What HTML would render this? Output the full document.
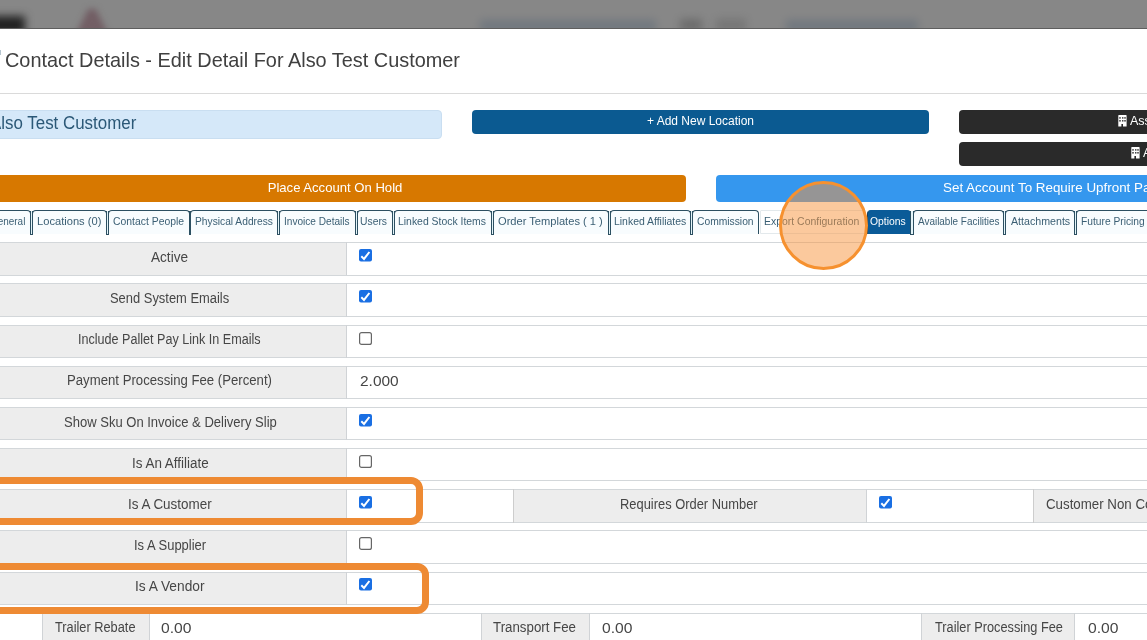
<!DOCTYPE html><html><head><meta charset="utf-8"><style>
html,body{margin:0;padding:0;width:1147px;height:640px;overflow:hidden;background:#fff;font-family:"Liberation Sans",sans-serif;}
body{position:relative;}
.a{position:absolute;box-sizing:border-box;}
.btn{color:#fff;text-align:center;white-space:nowrap;border-radius:4px;}
.tab{top:210px;height:24px;border:1px solid #2c4f61;border-bottom:none;border-radius:4px 4px 0 0;background:#f8fcfe;color:#3b5f74;font-size:10.8px;line-height:21px;white-space:pre;overflow:hidden;}
.gap{top:211px;height:24px;border:1px solid #2c4f61;border-top:none;background:#e4f5fa;}
.hb{height:1px;background:#d3d7da;}
.vb{width:1px;background:#d0d3d6;}
.lab{background:#ededed;color:#464646;font-size:14px;text-align:center;white-space:nowrap;}
.sx{display:inline-block;transform:scaleX(0.93);}
.sxl{display:inline-block;transform-origin:0 0;transform:scaleX(0.93);}
.cb{width:13px;height:13px;}
.val{font-size:13px;color:#454545;white-space:nowrap;letter-spacing:1px;}
.hl{border:7.2px solid #ee8a33;border-radius:12px;}
</style></head><body><div id="wrap" style="position:absolute;left:0;top:0;width:1147px;height:640px;overflow:hidden;will-change:transform;">
<div class="a" style="left:0;top:0;width:1147px;height:28.6px;background:#878787;"></div>
<div class="a" style="left:0;top:0;width:1147px;height:28px;overflow:hidden;"><div class="a" style="left:-10px;top:16px;width:35px;height:18px;background:#222;filter:blur(4px);"></div><div class="a" style="left:70px;top:4px;width:44px;height:30px;filter:blur(3px);"><div class="a" style="left:6px;top:5px;width:32px;height:25px;background:#725e64;clip-path:polygon(38% 0,62% 0,100% 100%,0 100%);"></div></div><div class="a" style="left:480px;top:20px;width:176px;height:12px;background:#5f6b78;filter:blur(4px);opacity:0.55"></div><div class="a" style="left:680px;top:19px;width:22px;height:12px;background:#5a5a5a;filter:blur(4px);opacity:0.6"></div><div class="a" style="left:716px;top:19px;width:30px;height:12px;background:#6a6a6a;filter:blur(4px);opacity:0.6"></div><div class="a" style="left:786px;top:20px;width:132px;height:12px;background:#5f6b78;filter:blur(4px);opacity:0.55"></div></div>
<div class="a" style="left:0;top:27.6px;width:1147px;height:1px;background:#5e5e5e;"></div>
<div class="a" style="left:0;top:50px;width:1.2px;height:5px;background:#b5c5d0;"></div>
<div class="a" style="left:5px;top:46.5px;font-size:21px;line-height:26px;color:#404040;white-space:nowrap;transform-origin:0 0;transform:scaleX(0.9470);">Contact Details - Edit Detail For Also Test Customer</div>
<div class="a" style="left:0;top:93px;width:1147px;height:1px;background:#dadada;"></div>
<div class="a" style="left:-20px;top:110px;width:462px;height:28.5px;background:#d5e8f9;border:1px solid #c9def1;border-radius:4px;"></div>
<div class="a" style="left:-10.29px;top:110px;font-size:17.5px;line-height:26px;color:#2b5877;white-space:nowrap;transform-origin:0 0;transform:scaleX(0.9662);">Also Test Customer</div>
<div class="a btn" style="left:472px;top:110px;width:457px;height:24px;background:#0b5a91;font-size:12px;line-height:23px;">+ Add New Location</div>
<div class="a btn" style="left:959px;top:110px;width:240px;height:23.5px;background:#2a2a2a;font-size:12px;line-height:23px;text-align:left;padding-left:171px;font-size:12.5px;">Assign</div>
<div class="a btn" style="left:959px;top:142.2px;width:240px;height:24.3px;background:#2a2a2a;font-size:12px;line-height:23px;text-align:left;padding-left:184px;font-size:12.5px;">Add</div>
<svg class="a" style="left:1117.9px;top:115px" width="9" height="12" viewBox="0 0 9 12"><path d="M0.3 0.6 Q0.3 0 0.9 0 H8 Q8.6 0 8.6 0.6 V11.6 H5 V9 H3.4 V11.6 H0.3 Z" fill="#fff"/><g fill="#333"><rect x="1.3" y="2.1" width="1.4" height="1.6"/><rect x="4.1" y="2.1" width="1.3" height="1.6"/><rect x="6.3" y="2.1" width="1.4" height="1.6"/><rect x="1.3" y="5" width="1.4" height="1.6"/><rect x="4.1" y="5" width="1.3" height="1.6"/><rect x="6.3" y="5" width="1.4" height="1.6"/></g></svg>
<svg class="a" style="left:1131.2px;top:147.2px" width="9" height="12" viewBox="0 0 9 12"><path d="M0.3 0.6 Q0.3 0 0.9 0 H8 Q8.6 0 8.6 0.6 V11.6 H5 V9 H3.4 V11.6 H0.3 Z" fill="#fff"/><g fill="#333"><rect x="1.3" y="2.1" width="1.4" height="1.6"/><rect x="4.1" y="2.1" width="1.3" height="1.6"/><rect x="6.3" y="2.1" width="1.4" height="1.6"/><rect x="1.3" y="5" width="1.4" height="1.6"/><rect x="4.1" y="5" width="1.3" height="1.6"/><rect x="6.3" y="5" width="1.4" height="1.6"/></g></svg>
<div class="a btn" style="left:-16px;top:175px;width:702px;height:26.5px;background:#d77800;font-size:13.1px;line-height:26px;">Place Account On Hold</div>
<div class="a btn" style="left:716px;top:175px;width:600px;height:26.5px;background:#3597ee;font-size:13.4px;line-height:26px;text-align:left;padding-left:227px;">Set Account To Require Upfront Payment</div>
<div class="a tab" style="left:-40px;width:71px;"><span class="a" style="left:29.45px;top:0;transform-origin:0 0;transform:scaleX(0.9200);">General</span></div>
<div class="a tab" style="left:32.4px;width:74.80000000000001px;"><span class="a" style="left:3.70px;top:0;transform-origin:0 0;transform:scaleX(1.0317);">Locations (0)</span></div>
<div class="a tab" style="left:108.2px;width:81.39999999999999px;"><span class="a" style="left:3.70px;top:0;transform-origin:0 0;transform:scaleX(0.9630);">Contact People</span></div>
<div class="a tab" style="left:190.4px;width:87.9px;"><span class="a" style="left:3.50px;top:0;transform-origin:0 0;transform:scaleX(0.9475);">Physical Address</span></div>
<div class="a tab" style="left:279.4px;width:76.20000000000005px;"><span class="a" style="left:3.50px;top:0;transform-origin:0 0;transform:scaleX(0.9342);">Invoice Details</span></div>
<div class="a tab" style="left:356.6px;width:36.19999999999999px;"><span class="a" style="left:2.80px;top:0;transform-origin:0 0;transform:scaleX(0.9573);">Users</span></div>
<div class="a tab" style="left:394px;width:98px;"><span class="a" style="left:3.40px;top:0;transform-origin:0 0;transform:scaleX(0.9647);">Linked Stock Items</span></div>
<div class="a tab" style="left:493.4px;width:115.20000000000005px;"><span class="a" style="left:3.20px;top:0;transform-origin:0 0;transform:scaleX(1.0293);">Order Templates ( 1 )</span></div>
<div class="a tab" style="left:609.6px;width:81.79999999999995px;"><span class="a" style="left:3.30px;top:0;transform-origin:0 0;transform:scaleX(0.9660);">Linked Affiliates</span></div>
<div class="a tab" style="left:692.4px;width:67.0px;"><span class="a" style="left:3.80px;top:0;transform-origin:0 0;transform:scaleX(0.9528);">Commission</span></div>
<div class="a tab" style="left:760.4px;width:106.10000000000002px;border-color:#e3e9ec;border-radius:1px 1px 0 0;background:#fff;border-bottom:1px solid #e3e9ec;"><span class="a" style="left:3.00px;top:0;transform-origin:0 0;transform:scaleX(0.9681);">Export Configuration</span></div>
<div class="a tab" style="left:866.5px;width:44.5px;background:#0a5b98;border-color:#0a5b98;border-left-color:#17405e;color:#fff;"><span class="a" style="left:2.90px;top:0;transform-origin:0 0;transform:scaleX(0.9592);">Options</span></div>
<div class="a tab" style="left:912.5px;width:91.5px;"><span class="a" style="left:4.00px;top:0;transform-origin:0 0;transform:scaleX(0.9196);">Available Facilities</span></div>
<div class="a tab" style="left:1005.3px;width:69.5px;"><span class="a" style="left:4.60px;top:0;transform-origin:0 0;transform:scaleX(0.9864);">Attachments</span></div>
<div class="a tab" style="left:1076.4px;width:83.59999999999991px;"><span class="a" style="left:3.70px;top:0;transform-origin:0 0;transform:scaleX(0.9477);">Future Pricing</span></div>
<div class="a gap" style="left:30px;width:3.3999999999999986px;"></div>
<div class="a gap" style="left:106.2px;width:3.0px;"></div>
<div class="a gap" style="left:188.6px;width:2.8000000000000114px;"></div>
<div class="a gap" style="left:277.3px;width:3.099999999999966px;"></div>
<div class="a gap" style="left:354.6px;width:3.0px;"></div>
<div class="a gap" style="left:391.8px;width:3.1999999999999886px;"></div>
<div class="a gap" style="left:491px;width:3.3999999999999773px;"></div>
<div class="a gap" style="left:607.6px;width:3.0px;"></div>
<div class="a gap" style="left:690.4px;width:3.0px;"></div>
<div class="a gap" style="left:910px;width:3.5px;"></div>
<div class="a gap" style="left:1003px;width:3.2999999999999545px;"></div>
<div class="a gap" style="left:1073.8px;width:3.6000000000001364px;"></div>
<div class="a lab" style="left:-6px;top:242.30px;width:352px;height:33.2px;"></div>
<span class="a" style="left:151.40px;top:249.85px;font-size:14px;line-height:14px;color:#464646;white-space:pre;transform-origin:0 0;transform:scaleX(0.9705);">Active</span>
<div class="a hb" style="left:0;top:242.30px;width:1147px;"></div>
<div class="a hb" style="left:0;top:274.50px;width:1147px;"></div>
<div class="a vb" style="left:346px;top:242.30px;height:33.2px;"></div>
<svg class="a" style="left:359.00px;top:249.10px" width="13" height="13" viewBox="0 0 13 13"><rect x="0" y="0" width="13" height="12.6" rx="2" fill="#1a6fe3"/><path d="M2.3 7.3 L5 9.9 L10.4 3" stroke="#fff" stroke-width="2" fill="none" stroke-linecap="butt" stroke-linejoin="miter"/></svg>
<div class="a lab" style="left:-6px;top:283.47px;width:352px;height:33.2px;"></div>
<span class="a" style="left:109.80px;top:291.02px;font-size:14px;line-height:14px;color:#464646;white-space:pre;transform-origin:0 0;transform:scaleX(0.9228);">Send System Emails</span>
<div class="a hb" style="left:0;top:283.47px;width:1147px;"></div>
<div class="a hb" style="left:0;top:315.67px;width:1147px;"></div>
<div class="a vb" style="left:346px;top:283.47px;height:33.2px;"></div>
<svg class="a" style="left:359.00px;top:290.27px" width="13" height="13" viewBox="0 0 13 13"><rect x="0" y="0" width="13" height="12.6" rx="2" fill="#1a6fe3"/><path d="M2.3 7.3 L5 9.9 L10.4 3" stroke="#fff" stroke-width="2" fill="none" stroke-linecap="butt" stroke-linejoin="miter"/></svg>
<div class="a lab" style="left:-6px;top:324.64px;width:352px;height:33.2px;"></div>
<span class="a" style="left:78.40px;top:332.19px;font-size:14px;line-height:14px;color:#464646;white-space:pre;transform-origin:0 0;transform:scaleX(0.8990);">Include Pallet Pay Link In Emails</span>
<div class="a hb" style="left:0;top:324.64px;width:1147px;"></div>
<div class="a hb" style="left:0;top:356.84px;width:1147px;"></div>
<div class="a vb" style="left:346px;top:324.64px;height:33.2px;"></div>
<svg class="a" style="left:359.00px;top:331.64px" width="13" height="13" viewBox="0 0 13 13"><rect x="0.6" y="0.6" width="11.8" height="11.8" rx="2" fill="#fff" stroke="#666" stroke-width="1.2"/></svg>
<div class="a lab" style="left:-6px;top:365.81px;width:352px;height:33.2px;"></div>
<span class="a" style="left:66.50px;top:373.36px;font-size:14px;line-height:14px;color:#464646;white-space:pre;transform-origin:0 0;transform:scaleX(0.9409);">Payment Processing Fee (Percent)</span>
<div class="a hb" style="left:0;top:365.81px;width:1147px;"></div>
<div class="a hb" style="left:0;top:398.01px;width:1147px;"></div>
<div class="a vb" style="left:346px;top:365.81px;height:33.2px;"></div>
<span class="a" style="left:359.70px;top:374.16px;font-size:14px;line-height:14px;color:#464646;white-space:pre;transform-origin:0 0;transform:scaleX(1.1042);">2.000</span>
<div class="a lab" style="left:-6px;top:406.98px;width:352px;height:33.2px;"></div>
<span class="a" style="left:63.70px;top:414.53px;font-size:14px;line-height:14px;color:#464646;white-space:pre;transform-origin:0 0;transform:scaleX(0.9302);">Show Sku On Invoice &amp; Delivery Slip</span>
<div class="a hb" style="left:0;top:406.98px;width:1147px;"></div>
<div class="a hb" style="left:0;top:439.18px;width:1147px;"></div>
<div class="a vb" style="left:346px;top:406.98px;height:33.2px;"></div>
<svg class="a" style="left:359.00px;top:413.78px" width="13" height="13" viewBox="0 0 13 13"><rect x="0" y="0" width="13" height="12.6" rx="2" fill="#1a6fe3"/><path d="M2.3 7.3 L5 9.9 L10.4 3" stroke="#fff" stroke-width="2" fill="none" stroke-linecap="butt" stroke-linejoin="miter"/></svg>
<div class="a lab" style="left:-6px;top:448.15px;width:352px;height:33.2px;"></div>
<span class="a" style="left:131.60px;top:455.70px;font-size:14px;line-height:14px;color:#464646;white-space:pre;transform-origin:0 0;transform:scaleX(0.9586);">Is An Affiliate</span>
<div class="a hb" style="left:0;top:448.15px;width:1147px;"></div>
<div class="a hb" style="left:0;top:480.35px;width:1147px;"></div>
<div class="a vb" style="left:346px;top:448.15px;height:33.2px;"></div>
<svg class="a" style="left:359.00px;top:455.15px" width="13" height="13" viewBox="0 0 13 13"><rect x="0.6" y="0.6" width="11.8" height="11.8" rx="2" fill="#fff" stroke="#666" stroke-width="1.2"/></svg>
<div class="a lab" style="left:-6px;top:489.32px;width:352px;height:33.2px;"></div>
<span class="a" style="left:127.90px;top:496.87px;font-size:14px;line-height:14px;color:#464646;white-space:pre;transform-origin:0 0;transform:scaleX(0.9603);">Is A Customer</span>
<div class="a hb" style="left:0;top:489.32px;width:1147px;"></div>
<div class="a hb" style="left:0;top:521.52px;width:1147px;"></div>
<div class="a vb" style="left:346px;top:489.32px;height:33.2px;"></div>
<svg class="a" style="left:359.00px;top:496.12px" width="13" height="13" viewBox="0 0 13 13"><rect x="0" y="0" width="13" height="12.6" rx="2" fill="#1a6fe3"/><path d="M2.3 7.3 L5 9.9 L10.4 3" stroke="#fff" stroke-width="2" fill="none" stroke-linecap="butt" stroke-linejoin="miter"/></svg>
<div class="a lab" style="left:513px;top:490.32px;width:353px;height:31.200000000000003px;"></div>
<div class="a lab" style="left:1033px;top:490.32px;width:200px;height:31.200000000000003px;"></div>
<span class="a" style="left:620.40px;top:496.87px;font-size:14px;line-height:14px;color:#464646;white-space:pre;transform-origin:0 0;transform:scaleX(0.9211);">Requires Order Number</span>
<span class="a" style="left:1045.70px;top:496.87px;font-size:14px;line-height:14px;color:#464646;white-space:pre;transform-origin:0 0;transform:scaleX(0.9500);">Customer Non Compliant</span>
<div class="a vb" style="left:512.5px;top:489.32px;height:33.2px;background:#cdcdcd;"></div>
<div class="a vb" style="left:866px;top:489.32px;height:33.2px;"></div>
<div class="a vb" style="left:1032.5px;top:489.32px;height:33.2px;background:#cdcdcd;"></div>
<svg class="a" style="left:879.30px;top:496.12px" width="13" height="13" viewBox="0 0 13 13"><rect x="0" y="0" width="13" height="12.6" rx="2" fill="#1a6fe3"/><path d="M2.3 7.3 L5 9.9 L10.4 3" stroke="#fff" stroke-width="2" fill="none" stroke-linecap="butt" stroke-linejoin="miter"/></svg>
<div class="a lab" style="left:-6px;top:530.49px;width:352px;height:33.2px;"></div>
<span class="a" style="left:133.70px;top:538.04px;font-size:14px;line-height:14px;color:#464646;white-space:pre;transform-origin:0 0;transform:scaleX(0.9264);">Is A Supplier</span>
<div class="a hb" style="left:0;top:530.49px;width:1147px;"></div>
<div class="a hb" style="left:0;top:562.69px;width:1147px;"></div>
<div class="a vb" style="left:346px;top:530.49px;height:33.2px;"></div>
<svg class="a" style="left:359.00px;top:537.49px" width="13" height="13" viewBox="0 0 13 13"><rect x="0.6" y="0.6" width="11.8" height="11.8" rx="2" fill="#fff" stroke="#666" stroke-width="1.2"/></svg>
<div class="a lab" style="left:-6px;top:571.66px;width:352px;height:33.2px;"></div>
<span class="a" style="left:135.30px;top:579.21px;font-size:14px;line-height:14px;color:#464646;white-space:pre;transform-origin:0 0;transform:scaleX(0.9810);">Is A Vendor</span>
<div class="a hb" style="left:0;top:571.66px;width:1147px;"></div>
<div class="a hb" style="left:0;top:603.86px;width:1147px;"></div>
<div class="a vb" style="left:346px;top:571.66px;height:33.2px;"></div>
<svg class="a" style="left:359.00px;top:578.46px" width="13" height="13" viewBox="0 0 13 13"><rect x="0" y="0" width="13" height="12.6" rx="2" fill="#1a6fe3"/><path d="M2.3 7.3 L5 9.9 L10.4 3" stroke="#fff" stroke-width="2" fill="none" stroke-linecap="butt" stroke-linejoin="miter"/></svg>
<div class="a hb" style="left:0;top:612.83px;width:1147px;"></div>
<div class="a lab" style="left:42.2px;top:613.83px;width:106.8px;height:40px;"></div>
<span class="a" style="left:54.70px;top:620.38px;font-size:14px;line-height:14px;color:#464646;white-space:pre;transform-origin:0 0;transform:scaleX(0.9128);">Trailer Rebate</span>
<div class="a vb" style="left:42.2px;top:612.83px;height:40px;"></div>
<div class="a vb" style="left:149px;top:612.83px;height:40px;"></div>
<span class="a" style="left:161.30px;top:620.68px;font-size:14px;line-height:14px;color:#464646;white-space:pre;transform-origin:0 0;transform:scaleX(1.1193);">0.00</span>
<div class="a lab" style="left:481px;top:613.83px;width:107.70000000000005px;height:40px;"></div>
<span class="a" style="left:493.10px;top:620.38px;font-size:14px;line-height:14px;color:#464646;white-space:pre;transform-origin:0 0;transform:scaleX(0.9496);">Transport Fee</span>
<div class="a vb" style="left:481px;top:612.83px;height:40px;"></div>
<div class="a vb" style="left:588.7px;top:612.83px;height:40px;"></div>
<span class="a" style="left:601.60px;top:620.68px;font-size:14px;line-height:14px;color:#464646;white-space:pre;transform-origin:0 0;transform:scaleX(1.1193);">0.00</span>
<div class="a lab" style="left:921.2px;top:613.83px;width:153.20000000000005px;height:40px;"></div>
<span class="a" style="left:934.50px;top:620.38px;font-size:14px;line-height:14px;color:#464646;white-space:pre;transform-origin:0 0;transform:scaleX(0.9115);">Trailer Processing Fee</span>
<div class="a vb" style="left:921.2px;top:612.83px;height:40px;"></div>
<div class="a vb" style="left:1074.4px;top:612.83px;height:40px;"></div>
<span class="a" style="left:1087.90px;top:620.68px;font-size:14px;line-height:14px;color:#464646;white-space:pre;transform-origin:0 0;transform:scaleX(1.1193);">0.00</span>
<div class="a hl" style="left:-30px;top:477px;width:453px;height:48px;"></div>
<div class="a hl" style="left:-30px;top:562.7px;width:459px;height:51px;"></div>
<div class="a" style="left:779.4px;top:180.9px;width:89px;height:89px;border-radius:50%;background:rgba(247,148,60,0.5);border:3.8px solid #f6912f;"></div>
</div></body></html>
